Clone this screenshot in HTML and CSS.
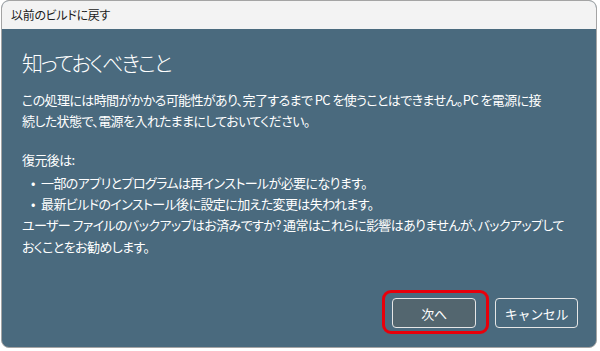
FILE: index.html
```html
<!DOCTYPE html>
<html lang="ja">
<head>
    <meta charset="UTF-8">
    <meta name="viewport" content="width=device-width, initial-scale=1.0">
    <title>以前のビルドに戻す</title>

    <link rel="stylesheet" href="styles.css">
</head>
<body>

    <!-- Dialog window -->
    <div class="window">
        <div class="title-bar">以前のビルドに戻す</div>

        <div class="content">
            <h1>知っておくべきこと</h1>

            <p class="intro">この処理には時間がかかる可能性があり、完了するまで PC を使うことはできません。PC を電源に接続した状態で、電源を入れたままにしておいてください。</p>

            <p class="after">復元後は:</p>
            <ul class="notes">
                <li>一部のアプリとプログラムは再インストールが必要になります。</li>
                <li>最新ビルドのインストール後に設定に加えた変更は失われます。</li>
            </ul>
            <p class="backup">ユーザー ファイルのバックアップはお済みですか? 通常はこれらに影響はありませんが、バックアップしておくことをお勧めします。</p>

            <!-- Buttons -->
            <div class="actions">
                <button class="btn btn-next">次へ<span class="highlight"></span></button>
                <button class="btn btn-cancel">キャンセル</button>
            </div>
        </div>
    </div>

</body>
</html>
```

FILE: styles.css
```css
/* General Styles */
body {
    margin: 0;
    padding: 0;
    background: #fff;
    font-family: "Noto Sans CJK JP", sans-serif;
    font-feature-settings: "palt" 1;
}

/* Window */
.window {
    width: 594px;
    height: 346px;
    margin-left: 1px;
    border: 1px solid #a4a4a4;
    border-radius: 8px;
    overflow: hidden;
    display: flex;
    flex-direction: column;
    background: #4a6a7e;
}

.title-bar {
    height: 28px;
    line-height: 28px;
    padding-left: 9px;
    background: #f3f3f3;
    color: #1a1a1a;
    font-size: 12px;
    letter-spacing: -0.3px;
    flex-shrink: 0;
}

/* Content */
.content {
    flex: 1;
    display: flex;
    flex-direction: column;
    padding: 18px 18px 19px 20px;
    color: #fff;
    font-size: 13px;
    line-height: 21.3px;
    letter-spacing: -0.6px;
}

h1 {
    margin: 0;
    font-size: 21px;
    font-weight: 300;
    line-height: 30px;
    letter-spacing: -2px;
}

.intro {
    margin: 12px 0 0;
    max-width: 524px;
}

.after {
    margin: 17px 0 0;
}

.notes {
    margin: 2px 0 0;
    padding: 0;
    list-style: none;
}

.notes li {
    position: relative;
    padding-left: 19px;
}

.notes li::before {
    content: "•";
    position: absolute;
    left: 9px;
}

.backup {
    margin: 0;
    max-width: 548px;
}

/* Buttons */
.actions {
    margin-top: auto;
    display: flex;
    justify-content: flex-end;
    gap: 19px;
}

.btn {
    position: relative;
    width: 84px;
    height: 30px;
    border: 1px solid #e6e6e6;
    border-radius: 4px;
    color: #fff;
    font-family: inherit;
    font-size: 13px;
    letter-spacing: -0.3px;
    background: #4a6a7e;
    padding: 0;
}

.btn-next {
    background: #53666f;
}

.btn-cancel {
    width: 83px;
}

/* Red annotation */
.highlight {
    position: absolute;
    left: -11px;
    top: -9px;
    width: 101px;
    height: 38px;
    border: 3px solid #e8000b;
    border-radius: 9px;
}
```
